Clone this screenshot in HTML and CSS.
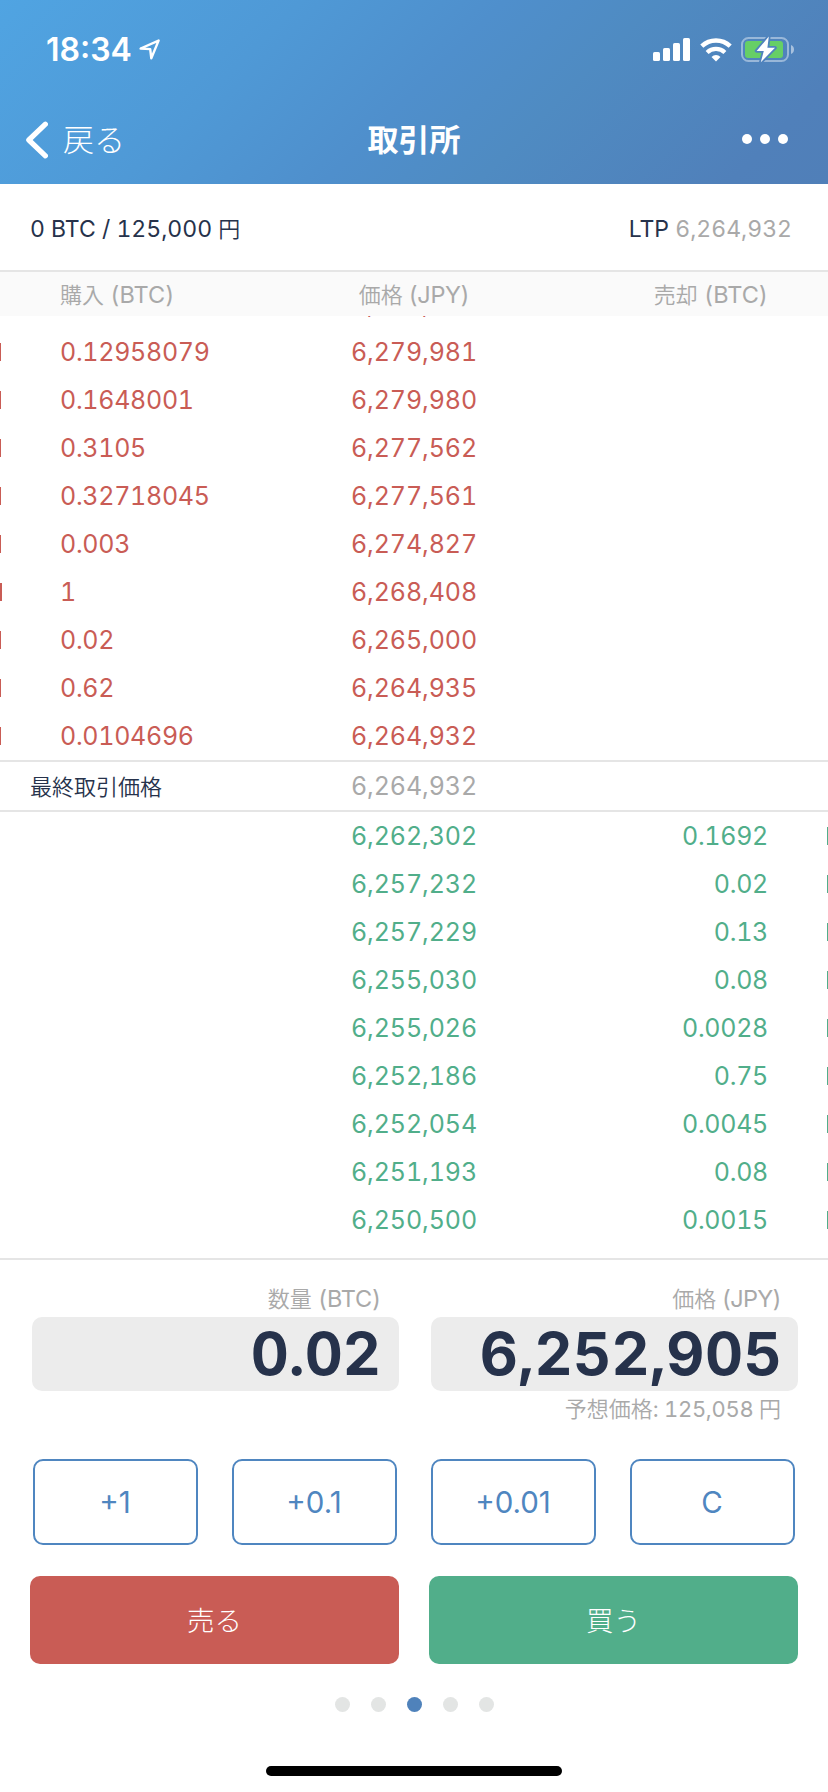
FILE: index.html
```
<!DOCTYPE html>
<html lang="ja">
<head>
<meta charset="utf-8">
<title>取引所</title>
<link rel="stylesheet" href="styles.css">
</head>
<body>
<div class="screen">
  <header class="top">
    <div class="status">
      <div class="clock"><span class="time">18:34</span>
        <svg class="loc" width="22" height="22" viewBox="0 0 22 22"><path d="M1.6 9.5 19.6 1.6 12.3 19.3 11.2 10.1Z" fill="none" stroke="#fff" stroke-width="2.4" stroke-linejoin="round"/></svg>
      </div>
      <div class="signals">
        <svg width="38" height="24" viewBox="0 0 38 24" fill="#fff"><rect x="0" y="14" width="7" height="9" rx="1.6"/><rect x="10" y="10" width="7" height="13" rx="1.6"/><rect x="20" y="5" width="7" height="18" rx="1.6"/><rect x="30" y="0" width="7" height="23" rx="1.6"/></svg>
        <svg class="wifi" width="32" height="24" viewBox="0 0 32 24" fill="none" stroke="#fff" stroke-width="4.4"><path d="M1.8 8.2a20.4 20.4 0 0 1 28.4 0"/><path d="M7.1 14.4a12.8 12.8 0 0 1 17.8 0" stroke-width="4.2"/><path d="M16 23.4 11.5 18.9a6.4 6.4 0 0 1 9 0Z" fill="#fff" stroke="none"/></svg>
        <svg class="battery" width="54" height="28" viewBox="0 0 54 28"><rect x="1" y="2" width="46" height="23" rx="6.5" fill="none" stroke="#fff" stroke-opacity=".42" stroke-width="2"/><path d="M50 9v9q3-1.3 3-4.5T50 9Z" fill="#fff" fill-opacity=".5"/><rect x="4" y="5" width="38" height="17" rx="3" fill="#66cf66"/><path d="M27.8.6 15.6 15h7.2L19.8 26.2 34 11.7h-7.6Z" fill="#fff" stroke="#4f83bd" stroke-width="3.6" paint-order="stroke" stroke-linejoin="round"/></svg>
      </div>
    </div>
    <nav class="nav">
      <a class="back"><svg width="24" height="40" viewBox="0 0 24 40"><path d="M21.4 4.2 4.8 20 21.4 35.8" fill="none" stroke="#fff" stroke-width="5.2" stroke-linecap="round" stroke-linejoin="round"/></svg><span>戻る</span></a>
      <h1 class="title">取引所</h1>
      <div class="more"><i></i><i></i><i></i></div>
    </nav>
  </header>

  <section class="account">
    <span class="balance">0 BTC / 125,000 <span class="jp">円</span></span>
    <span class="ltp">LTP <span class="muted">6,264,932</span></span>
  </section>

  <div class="heads">
    <span class="buy"><span class="jp">購入</span> (BTC)</span>
    <span class="mid"><span class="jp">価格</span> (JPY)</span>
    <span class="sell"><span class="jp">売却</span> (BTC)</span>
  </div>

  <div class="book asks">
    <div class="row"><span></span><span class="price">6,280,000</span></div>
    <div class="row"><i class="bar"></i><span class="qty">0.12958079</span><span class="price">6,279,981</span></div>
    <div class="row"><i class="bar"></i><span class="qty">0.1648001</span><span class="price">6,279,980</span></div>
    <div class="row"><i class="bar"></i><span class="qty">0.3105</span><span class="price">6,277,562</span></div>
    <div class="row"><i class="bar"></i><span class="qty">0.32718045</span><span class="price">6,277,561</span></div>
    <div class="row"><i class="bar"></i><span class="qty">0.003</span><span class="price">6,274,827</span></div>
    <div class="row"><i class="bar wide"></i><span class="qty">1</span><span class="price">6,268,408</span></div>
    <div class="row"><i class="bar"></i><span class="qty">0.02</span><span class="price">6,265,000</span></div>
    <div class="row"><i class="bar"></i><span class="qty">0.62</span><span class="price">6,264,935</span></div>
    <div class="row"><i class="bar"></i><span class="qty">0.0104696</span><span class="price">6,264,932</span></div>
  </div>

  <div class="last"><span class="last-label">最終取引価格</span><span class="price">6,264,932</span></div>

  <div class="book bids">
    <div class="row"><span class="price">6,262,302</span><span class="qty">0.1692</span><i class="bar"></i></div>
    <div class="row"><span class="price">6,257,232</span><span class="qty">0.02</span><i class="bar"></i></div>
    <div class="row"><span class="price">6,257,229</span><span class="qty">0.13</span><i class="bar"></i></div>
    <div class="row"><span class="price">6,255,030</span><span class="qty">0.08</span><i class="bar"></i></div>
    <div class="row"><span class="price">6,255,026</span><span class="qty">0.0028</span><i class="bar"></i></div>
    <div class="row"><span class="price">6,252,186</span><span class="qty">0.75</span><i class="bar"></i></div>
    <div class="row"><span class="price">6,252,054</span><span class="qty">0.0045</span><i class="bar"></i></div>
    <div class="row"><span class="price">6,251,193</span><span class="qty">0.08</span><i class="bar"></i></div>
    <div class="row"><span class="price">6,250,500</span><span class="qty">0.0015</span><i class="bar"></i></div>
  </div>

  <section class="order">
    <div class="fields">
      <div class="field">
        <div class="label"><span class="jp">数量</span> (BTC)</div>
        <div class="value">0.02</div>
      </div>
      <div class="field">
        <div class="label price-label"><span class="jp">価格</span> (JPY)</div>
        <div class="value price-value">6,252,905</div>
        <div class="estimate"><span class="jp">予想価格</span>: 125,058 <span class="jp">円</span></div>
      </div>
    </div>
    <div class="steps"><button>+1</button><button>+0.1</button><button>+0.01</button><button>C</button></div>
    <div class="actions"><button class="sell-btn">売る</button><button class="buy-btn">買う</button></div>
    <div class="dots"><i></i><i></i><i class="on"></i><i></i><i></i></div>
  </section>
  <div class="home"></div>
</div>
</body>
</html>
```
FILE: styles.css
```
* { box-sizing: border-box; }
body { margin: 0; }
.screen {
  width: 828px; height: 1792px; overflow: hidden;
  display: flex; flex-direction: column;
  background: #fff; color: #26324b;
  font-family: Inter, "Noto Sans CJK JP", sans-serif;
  font-size: 23px; line-height: 30px; font-variant-numeric: tabular-nums;
}
i { display: block; font-style: normal; }
.jp { font-family: "Noto Sans CJK JP", sans-serif; font-weight: 350; font-size: 22px; line-height: 0; letter-spacing: 0; }
.muted { color: #a9a9a9; }

.top {
  height: 184px; color: #fff;
  background: linear-gradient(135deg, #50a4e2 0%, #4f99d6 30%, #4f8fcc 50%, #4f8bc2 65%, #5080ba 90%, #507fb8 100%);
}
.status { height: 98px; padding: 2px 33px 0 46px; display: flex; justify-content: space-between; align-items: center; }
.clock { display: flex; align-items: center; }
.time { font-size: 32px; font-weight: 600; font-variant-numeric: normal; line-height: 40px; }
.loc { margin-left: 7px; }
.signals { display: flex; align-items: center; }
.wifi { margin-left: 9px; }
.battery { margin-left: 9px; }
.nav { height: 86px; padding: 0 40px 2px 24px; display: grid; grid-template-columns: 1fr auto 1fr; align-items: center; }
.back { display: flex; align-items: center; gap: 15px; font: 300 31px/40px "Noto Sans CJK JP", sans-serif; }
.back span { padding-bottom: 4px; }
.title { margin: 0 0 0 16px; padding-bottom: 5px; font: 700 31px/40px "Noto Sans CJK JP", sans-serif; }
.more { display: flex; gap: 8px; justify-content: flex-end; padding-bottom: 2px; }
.more i { width: 10px; height: 10px; border-radius: 50%; background: #fff; }

.account { height: 88px; padding: 3px 36px 0 30px; border-bottom: 2px solid #e5e5e5; display: flex; justify-content: space-between; align-items: center; }
.heads { height: 44px; padding: 2px 60px 0; background: #fafafa; color: #a9a9a9; font-size: 23.5px; display: grid; grid-template-columns: 1fr auto 1fr; align-items: center; }
.mid { letter-spacing: -.4px; }
.sell { text-align: right; }

.book { font-size: 25px; display: flex; flex-direction: column; }
.price { letter-spacing: -.1px; }
.qty { letter-spacing: -.3px; }
.row { flex: none; height: 48px; display: grid; align-items: center; }
.asks { height: 444px; overflow: hidden; justify-content: flex-end; color: #c95c55; }
.asks .row { grid-template-columns: 60px 291px 1fr; }
.asks .row > span:first-child { grid-column: 1 / 3; }
.bids { height: 446px; color: #51ae8a; }
.bids .row { grid-template-columns: 150px 1fr 60px; padding-left: 351px; }
.bids .qty { text-align: right; }
.bar { width: 1px; height: 18px; background: currentColor; }
.bar.wide { width: 2px; }
.bids .bar { justify-self: end; }
.last { height: 52px; border: solid #e5e5e5; border-width: 2px 0; display: grid; grid-template-columns: 321px 1fr; padding-left: 30px; align-items: center; }
.last-label { padding-bottom: 2px; font: 350 22px/30px "Noto Sans CJK JP", sans-serif; }
.last .price { font-size: 25px; color: #a9a9a9; }

.order { border-top: 2px solid #e5e5e5; padding: 24px 30px 0 32px; }
.fields { display: grid; grid-template-columns: 367px 367px; gap: 32px; height: 175px; }
.label, .estimate { color: #a9a9a9; text-align: right; }
.label { height: 33px; padding-right: 18px; font-size: 23.5px; letter-spacing: -.2px; }
.price-label { letter-spacing: -.7px; padding-right: 17px; }
.estimate { padding-right: 17px; line-height: 36px; font-size: 22px; letter-spacing: -.3px; }
.value { height: 74px; border-radius: 10px; background: #ececec; padding-right: 18px; text-align: right; font-size: 59px; font-weight: 700; line-height: 74px; }
.price-value { padding-right: 16px; letter-spacing: .4px; }
.steps { display: grid; grid-template-columns: repeat(4, 165px); column-gap: 34px; padding-left: 1px; }
button { font: inherit; padding: 0; border: 0; }
.steps button { height: 86px; padding-right: 1px; border: 2px solid #4f86c0; border-radius: 10px; background: #fff; color: #4f86c0; font-size: 29.5px; font-variant-numeric: normal; }
.actions { display: grid; grid-template-columns: 369px 369px; column-gap: 30px; margin: 31px 0 0 -2px; }
.actions button { height: 88px; border-radius: 10px; color: #fff; font: 300 27.5px/86px "Noto Sans CJK JP", sans-serif; padding-bottom: 2px; }
.actions .sell-btn { background: #c95c55; }
.actions .buy-btn { background: #51ae8a; }
.dots { margin: 33px 0 0 -2px; display: flex; justify-content: center; gap: 21px; }
.dots i { width: 15px; height: 15px; border-radius: 50%; background: #e3e5e4; }
.dots .on { background: #4f82bb; }
.home { width: 296px; height: 10px; border-radius: 5px; background: #000; margin: 54px auto 0; }
```
